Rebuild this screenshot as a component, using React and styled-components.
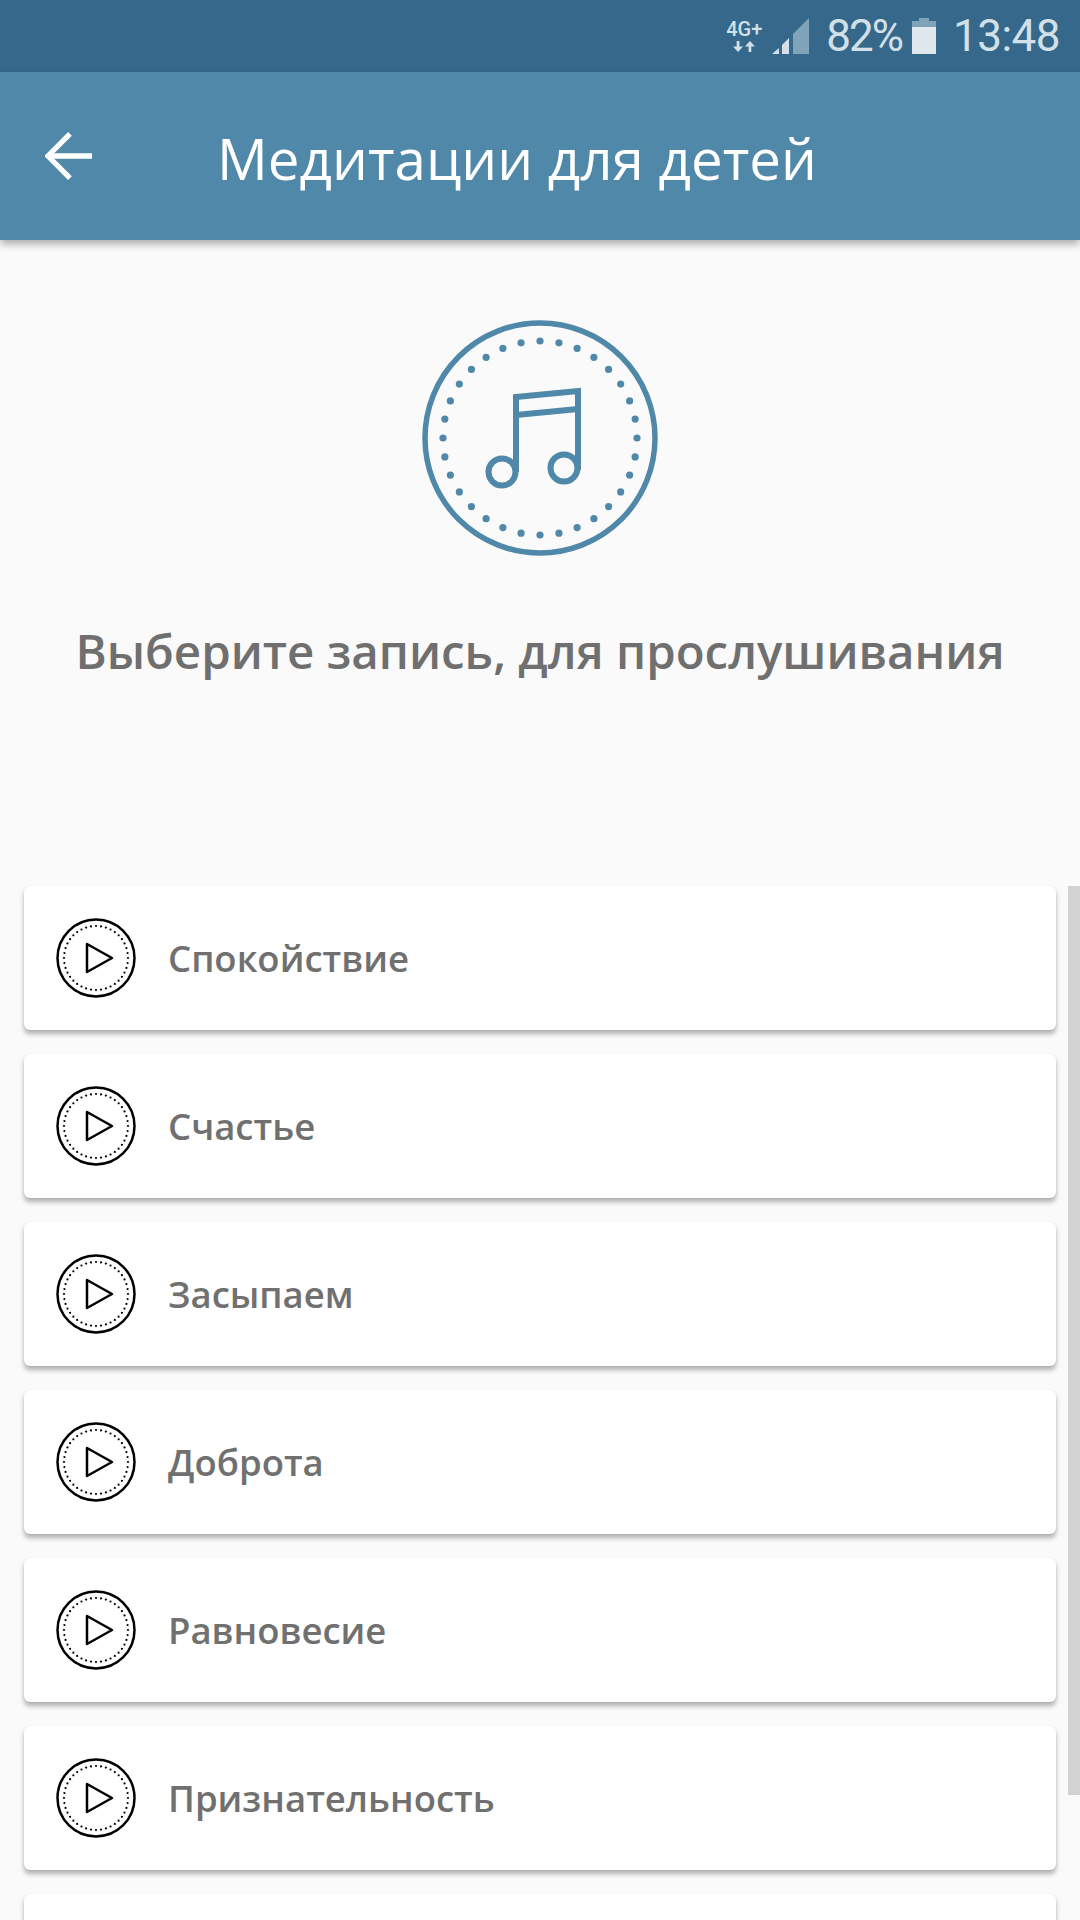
import styled, { createGlobalStyle } from 'styled-components';

const GlobalStyle = createGlobalStyle`
  html, body {
    margin: 0;
    padding: 0;
    background: #fafafa;
  }
`;

const Screen = styled.div`
  width: 1080px;
  height: 1920px;
  overflow: hidden;
  background: #fafafa;
  font-family: "Open Sans", "Noto Sans", sans-serif;
`;

const StatusBar = styled.div`
  height: 72px;
  box-sizing: border-box;
  background: #35688a;
  color: #d3e0e8;
  display: flex;
  justify-content: flex-end;
  align-items: center;
  padding-right: 20px;
`;

const NetBadge = styled.div`
  width: 38px;
  margin-right: 9px;
  display: flex;
  flex-direction: column;
  align-items: center;
  gap: 3px;
  font-size: 20px;
  line-height: 17px;
  font-weight: 500;
  white-space: nowrap;
  font-family: "Roboto", sans-serif;
`;

const StatusText = styled.span`
  font-family: "Roboto", sans-serif;
  font-size: 44px;
  line-height: 72px;
  letter-spacing: ${p => p.$spacing}px;
  margin-left: ${p => p.$left}px;
`;

const BatterySvg = styled.svg`
  margin-left: 10px;
`;

const Header = styled.header`
  position: relative;
  height: 168px;
  background: #5088a9;
  box-shadow: 0 4px 8px rgba(0, 0, 0, 0.32);
  display: flex;
  align-items: center;
  padding-left: 45px;
  color: #fff;
`;

const Title = styled.h1`
  margin: 6px 0 0 124px;
  font-size: 56.500px;
  font-weight: 400;
  line-height: 72px;
  white-space: nowrap;
`;

const Hero = styled.section`
  height: 646px;
  box-sizing: border-box;
  padding-top: 80px;
  display: flex;
  flex-direction: column;
  align-items: center;
`;

const Prompt = styled.h2`
  margin: 62px 0 0;
  font-size: 47.400px;
  line-height: 66px;
  font-weight: 600;
  color: #6f6f6f;
  white-space: nowrap;
`;

const ListArea = styled.div`
  position: relative;
  padding: 0 24px;
  display: flex;
  flex-direction: column;
  gap: 24px;
`;

const Scrollbar = styled.div`
  position: absolute;
  top: 0;
  right: 0;
  width: 12px;
  height: 909px;
  background: #d2d2d2;
`;

const Card = styled.div`
  height: 144px;
  flex-shrink: 0;
  background: #fff;
  border-radius: 6px;
  box-shadow: 0 4px 5px rgba(0, 0, 0, 0.3), 0 0 2px rgba(0, 0, 0, 0.06);
  display: flex;
  align-items: center;
  padding-left: 32px;
`;

const CardLabel = styled.span`
  margin-left: 32px;
  font-size: 36.500px;
  line-height: 52px;
  font-weight: 600;
  color: #707070;
  white-space: nowrap;
`;

const BackArrow = () => (
  <svg width="48" height="48" viewBox="0 0 50 50" fill="none" stroke="#fff" strokeWidth="5.500">
    <path d="M49 25H4" />
    <path d="M26 2L3 25l23 23" />
  </svg>
);

const SignalIcon = () => (
  <svg width="37" height="36" viewBox="0 0 37 36">
    <path d="M37 0V36H21V16Z" fill="#7fa3b8" />
    <path d="M17 20V36H10V27Z" fill="#d3e0e8" />
    <path d="M7 30V36H0Z" fill="#d3e0e8" />
  </svg>
);

const DataArrows = () => (
  <svg width="22" height="11" viewBox="0 0 24 12" fill="#d3e0e8">
    <path d="M4 0h3v6h4l-5.500 6L0 6h4Z" />
    <path d="M17 12h3V6h4l-5.500-6L13 6h4Z" />
  </svg>
);

const BatteryIcon = () => (
  <BatterySvg width="24" height="36" viewBox="0 0 24 36">
    <path d="M7 0h10v3h7v6H0V3h7Z" fill="#7fa3b8" />
    <rect y="9" width="24" height="27" fill="#dfe7ec" />
  </BatterySvg>
);

// one ring of dots, shared by the big icon and the row icons
const DotRing = ({ cx, cy, radius, count, size, color }) => (
  <g fill={color} stroke="none">
    {Array.from({ length: count }, (_, i) => {
      const a = (i / count) * Math.PI * 2;
      return <circle key={i} cx={cx + Math.cos(a) * radius} cy={cy + Math.sin(a) * radius} r={size} />;
    })}
  </g>
);

const MusicBadge = () => (
  <svg width="236" height="236" viewBox="22 20 236 236" fill="none" stroke="#5088a9" strokeWidth="5.500">
    <circle cx="140" cy="138" r="115" />
    <DotRing cx={140} cy={138} radius={97} count={32} size={3.600} color="#5088a9" />
    <path d="M116 172V97L178 91V170" strokeWidth="6" />
    <path d="M116 115L178 109" strokeWidth="6" />
    <circle cx="102" cy="172" r="13.500" strokeWidth="6" />
    <circle cx="164" cy="168" r="13.500" strokeWidth="6" />
  </svg>
);

const PlayBadge = () => (
  <svg width="80" height="80" viewBox="-40 -40 80 80" fill="none" stroke="#000" strokeWidth="2.500" style={{ flexShrink: 0 }}>
    <circle r="38.500" />
    <DotRing cx={0} cy={0} radius={32} count={40} size={1.100} color="#000" />
    <path d="M-9 -14L16 0L-9 14Z" strokeLinejoin="round" />
  </svg>
);

const tracks = ['Спокойствие', 'Счастье', 'Засыпаем', 'Доброта', 'Равновесие', 'Признательность', ''];

const App = () => {
  return (
    <Screen>
      <GlobalStyle />
      <StatusBar>
        <NetBadge>
          4G+
          <DataArrows />
        </NetBadge>
        <SignalIcon />
        <StatusText $left={17} $spacing={-2}>82%</StatusText>
        <BatteryIcon />
        <StatusText $left={17} $spacing={-0.500}>13:48</StatusText>
      </StatusBar>
      <Header>
        <BackArrow />
        <Title>Медитации для детей</Title>
      </Header>
      <Hero>
        <MusicBadge />
        <Prompt>Выберите запись, для прослушивания</Prompt>
      </Hero>
      <ListArea>
        <Scrollbar />
        {tracks.map((name, i) => (
          <Card key={i}>
            <PlayBadge />
            <CardLabel>{name}</CardLabel>
          </Card>
        ))}
      </ListArea>
    </Screen>
  );
};

export default App;
